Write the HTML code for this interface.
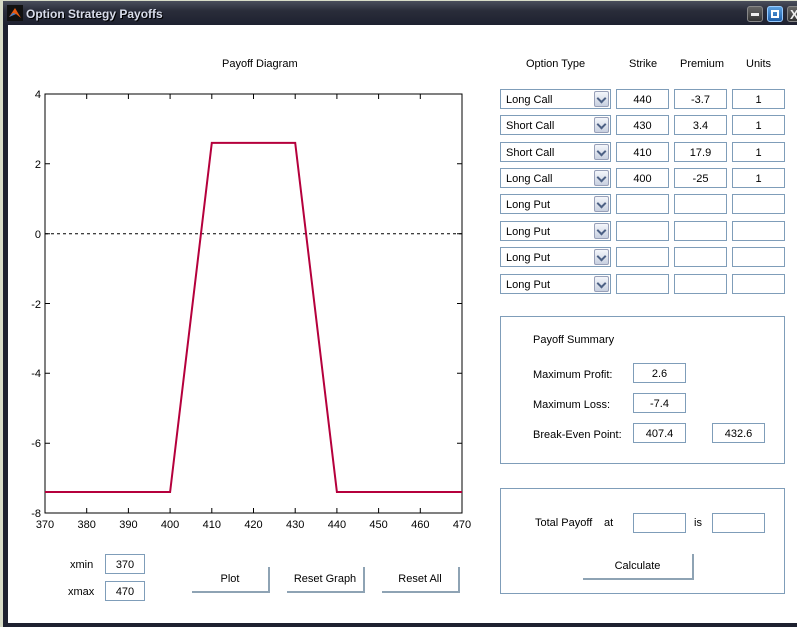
<!DOCTYPE html>
<html><head><meta charset="utf-8"><style>
*{margin:0;padding:0;box-sizing:border-box}
body{width:797px;height:627px;overflow:hidden;background:#d8dcc8;font-family:"Liberation Sans",sans-serif;font-size:11px;color:#000;position:relative}
.a{position:absolute}
.t{padding-top:1px}
.win{left:3px;top:1px;width:800px;height:626px;background:#1e2130}
.title{left:3px;top:1px;width:800px;height:24px;background:linear-gradient(#4a4e5c,#2a2d3a 40%,#1e2130);}
.ttxt{left:26px;top:7px;color:#d8dcea;font-weight:bold;font-size:12px;text-shadow:1px 1px 0 #000}
.body{left:8px;top:25px;width:795px;height:598px;background:#fff}
.box{border:1px solid #7f9db9;background:#fff;text-align:center;line-height:20px;height:20px}
.dd{border:1px solid #7f9db9;background:#fff;height:20px;line-height:20px;padding-left:5px}
.dd i{position:absolute;right:1px;top:1px;width:15px;height:16px;border:1px solid #98a0b8;border-radius:2px;background:linear-gradient(#f4f6fb,#c8d0e0)}
.dd i:after{content:"";position:absolute;left:3px;top:3px;width:5px;height:5px;border-right:2px solid #4d6185;border-bottom:2px solid #4d6185;transform:rotate(45deg)}
.btn{background:#fff;border-right:2px solid #8ea3b4;border-bottom:2px solid #8ea3b4;text-align:center;line-height:25px;height:26px}
.pan{border:1px solid #7f9db9}
.tb{width:16px;height:16px;border-radius:3px;top:6px;background:linear-gradient(#666,#333);border:1px solid #888}
</style></head><body>
<div class="a win"></div>
<div class="a title"></div>
<div class="a" style="left:7px;top:5px;width:16px;height:16px;background:#111"><svg width="16" height="16"><path d="M2 12 L8 3 L14 13 L9 9 Z" fill="#e85a10"/><path d="M2 12 L6 8 L9 9Z" fill="#3a7fd0"/></svg></div>
<div class="a ttxt">Option Strategy Payoffs</div>
<div class="a tb" style="left:747px"><div class="a" style="left:3px;top:6px;width:8px;height:3px;background:#eee"></div></div>
<div class="a tb" style="left:767px;background:linear-gradient(#5aa0e0,#1f5fa8);border-color:#9cf"><div class="a" style="left:3px;top:3px;width:8px;height:8px;border:2px solid #fff"></div></div>
<div class="a tb" style="left:787px"><span class="a" style="left:2px;top:0;color:#eee;font-weight:bold;font-size:13px">X</span></div>
<div class="a body"></div>

<div class="a t" style="left:222px;top:57px">Payoff Diagram</div>
<svg class="a" style="left:0;top:0" width="480" height="540" font-family="Liberation Sans" font-size="11">
<rect x="45" y="94" width="417" height="419" fill="none" stroke="#000"/>
<g stroke="#000">
<path d="M86.7 94v5M128.4 94v5M170.1 94v5M211.8 94v5M253.5 94v5M295.2 94v5M336.9 94v5M378.6 94v5M420.3 94v5"/>
<path d="M86.7 513v-5M128.4 513v-5M170.1 513v-5M211.8 513v-5M253.5 513v-5M295.2 513v-5M336.9 513v-5M378.6 513v-5M420.3 513v-5"/>
<path d="M45 163.8h5M45 233.7h5M45 303.5h5M45 373.3h5M45 443.2h5M462 163.8h-5M462 233.7h-5M462 303.5h-5M462 373.3h-5M462 443.2h-5"/>
</g>
<line x1="45" y1="233.7" x2="462" y2="233.7" stroke="#000" stroke-dasharray="3,3"/>
<polyline points="45,492 170.1,492 211.8,142.9 295.2,142.9 336.9,492 462,492" fill="none" stroke="#b5003c" stroke-width="2"/>
<g text-anchor="end"><text x="41" y="98">4</text><text x="41" y="168">2</text><text x="41" y="238">0</text><text x="41" y="308">-2</text><text x="41" y="377">-4</text><text x="41" y="447">-6</text><text x="41" y="517">-8</text></g>
<g text-anchor="middle"><text x="45" y="528">370</text><text x="86.7" y="528">380</text><text x="128.4" y="528">390</text><text x="170.1" y="528">400</text><text x="211.8" y="528">410</text><text x="253.5" y="528">420</text><text x="295.2" y="528">430</text><text x="336.9" y="528">440</text><text x="378.6" y="528">450</text><text x="420.3" y="528">460</text><text x="462" y="528">470</text></g>
</svg>

<div class="a t" style="left:70px;top:558px">xmin</div>
<div class="a t" style="left:68px;top:585px">xmax</div>
<div class="a box" style="left:105px;top:554px;width:40px">370</div>
<div class="a box" style="left:105px;top:581px;width:40px">470</div>
<div class="a btn" style="left:192px;top:567px;width:78px">Plot</div>
<div class="a btn" style="left:287px;top:567px;width:78px">Reset Graph</div>
<div class="a btn" style="left:382px;top:567px;width:78px">Reset All</div>

<div class="a t" style="left:526px;top:57px">Option Type</div>
<div class="a t" style="left:629px;top:57px">Strike</div>
<div class="a t" style="left:680px;top:57px">Premium</div>
<div class="a t" style="left:746px;top:57px">Units</div>

<div class="a dd" style="left:500px;top:89px;width:111px">Long Call<i></i></div>
<div class="a dd" style="left:500px;top:115px;width:111px">Short Call<i></i></div>
<div class="a dd" style="left:500px;top:142px;width:111px">Short Call<i></i></div>
<div class="a dd" style="left:500px;top:168px;width:111px">Long Call<i></i></div>
<div class="a dd" style="left:500px;top:194px;width:111px">Long Put<i></i></div>
<div class="a dd" style="left:500px;top:221px;width:111px">Long Put<i></i></div>
<div class="a dd" style="left:500px;top:247px;width:111px">Long Put<i></i></div>
<div class="a dd" style="left:500px;top:274px;width:111px">Long Put<i></i></div>

<div class="a box" style="left:616px;top:89px;width:53px">440</div><div class="a box" style="left:674px;top:89px;width:53px">-3.7</div><div class="a box" style="left:732px;top:89px;width:53px">1</div>
<div class="a box" style="left:616px;top:115px;width:53px">430</div><div class="a box" style="left:674px;top:115px;width:53px">3.4</div><div class="a box" style="left:732px;top:115px;width:53px">1</div>
<div class="a box" style="left:616px;top:142px;width:53px">410</div><div class="a box" style="left:674px;top:142px;width:53px">17.9</div><div class="a box" style="left:732px;top:142px;width:53px">1</div>
<div class="a box" style="left:616px;top:168px;width:53px">400</div><div class="a box" style="left:674px;top:168px;width:53px">-25</div><div class="a box" style="left:732px;top:168px;width:53px">1</div>
<div class="a box" style="left:616px;top:194px;width:53px"></div><div class="a box" style="left:674px;top:194px;width:53px"></div><div class="a box" style="left:732px;top:194px;width:53px"></div>
<div class="a box" style="left:616px;top:221px;width:53px"></div><div class="a box" style="left:674px;top:221px;width:53px"></div><div class="a box" style="left:732px;top:221px;width:53px"></div>
<div class="a box" style="left:616px;top:247px;width:53px"></div><div class="a box" style="left:674px;top:247px;width:53px"></div><div class="a box" style="left:732px;top:247px;width:53px"></div>
<div class="a box" style="left:616px;top:274px;width:53px"></div><div class="a box" style="left:674px;top:274px;width:53px"></div><div class="a box" style="left:732px;top:274px;width:53px"></div>

<div class="a pan" style="left:500px;top:316px;width:285px;height:148px"></div>
<div class="a t" style="left:533px;top:333px">Payoff Summary</div>
<div class="a t" style="left:533px;top:368px">Maximum Profit:</div>
<div class="a t" style="left:533px;top:398px">Maximum Loss:</div>
<div class="a t" style="left:533px;top:428px">Break-Even Point:</div>
<div class="a box" style="left:633px;top:363px;width:53px">2.6</div>
<div class="a box" style="left:633px;top:393px;width:53px">-7.4</div>
<div class="a box" style="left:633px;top:423px;width:53px">407.4</div>
<div class="a box" style="left:712px;top:423px;width:53px">432.6</div>

<div class="a pan" style="left:500px;top:488px;width:285px;height:106px"></div>
<div class="a t" style="left:535px;top:516px">Total Payoff</div>
<div class="a t" style="left:604px;top:516px">at</div>
<div class="a t" style="left:694px;top:516px">is</div>
<div class="a box" style="left:633px;top:513px;width:53px"></div>
<div class="a box" style="left:712px;top:513px;width:53px"></div>
<div class="a btn" style="left:583px;top:554px;width:111px">Calculate</div>
</body></html>
